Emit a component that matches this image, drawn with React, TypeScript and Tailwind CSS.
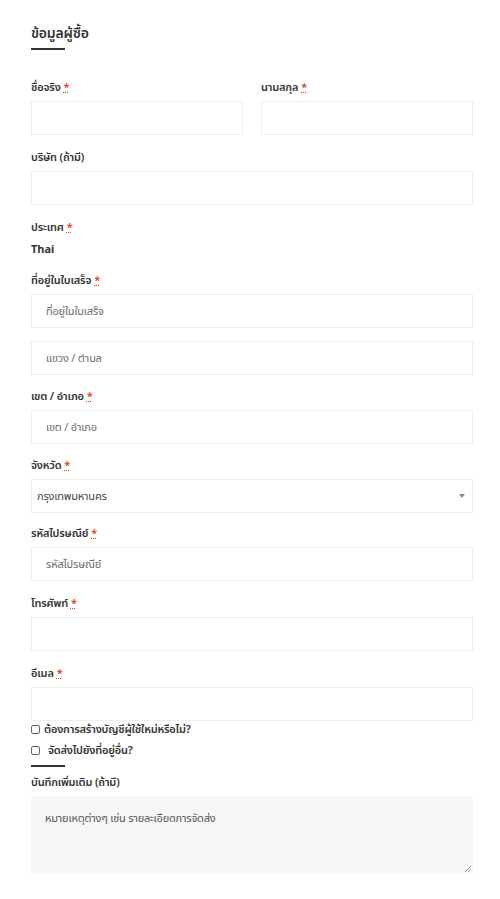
const font = { fontFamily: '"Noto Sans", "Noto Sans Thai", Roboto, sans-serif' };

function Label({ text, req }: { text: string; req?: boolean }) {
  return (
    <div className="h-[20px] flex items-center text-[11px] font-semibold text-[#333] tracking-[-0.2px] mb-[4px]">
      {text}
      {req && <span className="ml-[3px] text-[#e2401c] underline decoration-dotted">*</span>}
    </div>
  );
}

function Input({ ph }: { ph?: string }) {
  return (
    <div className="h-[34px] border border-[#eee] bg-white flex items-center px-[14px] text-[11px] tracking-[-0.2px] text-[#6b6b6b]">
      {ph}
    </div>
  );
}

export default function App() {
  return (
    <div className="w-[500px] h-[899px] bg-white text-[#333]" style={font}>
      <div className="pl-[31px] pr-[27px] pt-[22px]">
        <h3 className="text-[14px] font-semibold text-[#333] leading-[22px] tracking-[-0.2px]">ข้อมูลผู้ซื้อ</h3>
        <div className="w-[34px] h-[2px] bg-[#333] mt-[4px]" />

        <div className="grid grid-cols-2 gap-[18px] mt-[27px]">
          <div>
            <Label text="ชื่อจริง" req />
            <Input />
          </div>
          <div>
            <Label text="นามสกุล" req />
            <Input />
          </div>
        </div>

        <div className="mt-[12px]">
          <Label text="บริษัท (ถ้ามี)" />
          <Input />
        </div>

        <div className="mt-[12px]">
          <Label text="ประเทศ" req />
          <div className="text-[11px] font-bold h-[16px] flex items-center">Thai</div>
        </div>

        <div className="mt-[13px]">
          <Label text="ที่อยู่ในใบเสร็จ" req />
          <Input ph="ที่อยู่ในใบเสร็จ" />
          <div className="mt-[13px]">
            <Input ph="แขวง / ตำบล" />
          </div>
        </div>

        <div className="mt-[11px]">
          <Label text="เขต / อำเภอ" req />
          <Input ph="เขต / อำเภอ" />
        </div>

        <div className="mt-[11px]">
          <Label text="จังหวัด" req />
          <div className="h-[34px] border border-[#eee] bg-white flex items-center justify-between pl-[5px] pr-[7px] text-[11px] tracking-[-0.2px] text-[#444]">
            <span>กรุงเทพมหานคร</span>
            <span className="w-0 h-0 border-l-[3px] border-r-[3px] border-t-[4px] border-l-transparent border-r-transparent border-t-[#888]" />
          </div>
        </div>

        <div className="mt-[10px]">
          <Label text="รหัสไปรษณีย์" req />
          <Input ph="รหัสไปรษณีย์" />
        </div>

        <div className="mt-[12px]">
          <Label text="โทรศัพท์" req />
          <Input />
        </div>

        <div className="mt-[12px]">
          <Label text="อีเมล" req />
          <Input />
        </div>

        <div className="flex items-center h-[16px] text-[11px] font-semibold tracking-[-0.2px]">
          <span className="w-[9px] h-[9px] border border-[#666] rounded-[2px] mr-[4px]" />
          ต้องการสร้างบัญชีผู้ใช้ใหม่หรือไม่?
        </div>
        <div className="mt-[5px] flex items-center h-[16px] text-[11px] font-semibold tracking-[-0.2px]">
          <span className="w-[9px] h-[9px] border border-[#666] rounded-[2px] mr-[8px]" />
          จัดส่งไปยังที่อยู่อื่น?
        </div>
        <div className="w-[34px] h-[2px] bg-[#333] mt-[7px]" />

        <div className="mt-[5px]">
          <Label text="บันทึกเพิ่มเติม (ถ้ามี)" />
          <div className="relative h-[78px] mt-[3px] bg-[#f7f7f7] px-[14px] pt-[14px] text-[11px] tracking-[-0.2px] text-[#555]">
            หมายเหตุต่างๆ เช่น รายละเอียดการจัดส่ง
            <svg className="absolute right-[2px] bottom-[2px]" width="6" height="6" viewBox="0 0 6 6">
              <path d="M6 0L0 6M6 3L3 6" stroke="#999" strokeWidth="1" />
            </svg>
          </div>
        </div>
      </div>
    </div>
  );
}
